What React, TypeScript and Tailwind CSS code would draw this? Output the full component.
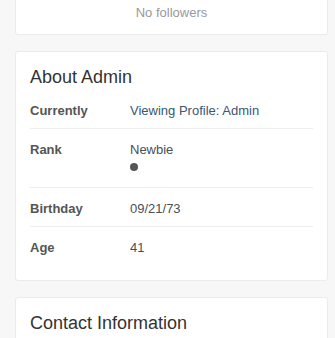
export default function App() {
  const rows: { label: string; value: React.ReactNode }[] = [
    {
      label: "Currently",
      value: <span className="text-[#3a5673]">Viewing Profile: Admin</span>,
    },
    {
      label: "Rank",
      value: (
        <div>
          <div>Newbie</div>
          <div className="h-5 pt-[3px]">
            <span className="block h-[8px] w-[8px] rounded-full bg-[#555]" />
          </div>
        </div>
      ),
    },
    { label: "Birthday", value: "09/21/73" },
    { label: "Age", value: "41" },
  ];

  return (
    <div
      className="h-[338px] w-[335px] overflow-hidden bg-[#f7f7f7] text-[13px] leading-5"
      style={{ fontFamily: '"Liberation Sans", Arial, sans-serif' }}
    >
      <div className="ml-[15px] -mt-[20px] w-[313px] rounded-[3px] border border-[#ebebeb] bg-white pt-[22px] pb-[11px] text-center text-[#999]">
        No followers
      </div>

      <div className="ml-[15px] mt-[16px] w-[313px] rounded-[3px] border border-[#ebebeb] bg-white px-[14px] pt-[15px] pb-[15px]">
        <h2 className="text-[18px] leading-5 text-[#333]">About Admin</h2>
        <div className="mt-[3px]">
          {rows.map((r, i) => (
            <div
              key={r.label}
              className={`flex pt-[11px] pb-[7px] ${i < rows.length - 1 ? "border-b border-[#eeeeee]" : ""}`}
            >
              <div className="w-[100px] shrink-0 font-bold text-[#555]">{r.label}</div>
              <div className="text-[#4a4f57]">{r.value}</div>
            </div>
          ))}
        </div>
      </div>

      <div className="ml-[15px] mt-[16px] w-[313px] rounded-[3px] border border-[#ebebeb] bg-white px-[14px] pt-[15px] pb-[15px]">
        <h2 className="text-[18px] leading-5 text-[#333]">Contact Information</h2>
      </div>
    </div>
  );
}
